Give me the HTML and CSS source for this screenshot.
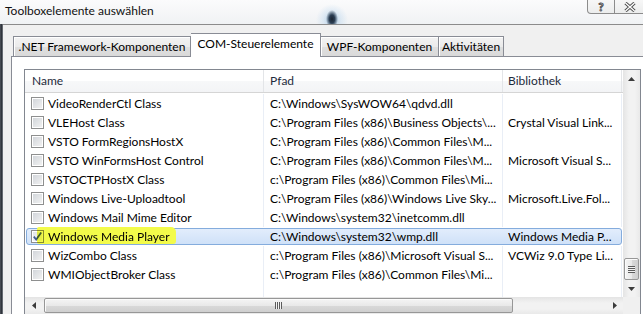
FILE: index.html
```html
<!DOCTYPE html>
<html lang="de">
<head>
    <meta charset="UTF-8">
    <meta name="viewport" content="width=device-width, initial-scale=1.0">
    <title>Toolboxelemente auswählen</title>
    <link rel="stylesheet" href="styles.css">
</head>
<body>
    <div class="window">
        <div class="titlebar">
            <span class="title">Toolboxelemente auswählen</span>
            <div class="caption-buttons">
                <span class="cap-btn cap-help">?</span>
                <span class="cap-btn cap-close">
                    <svg width="12" height="10" viewBox="0 0 12 10"><path d="M1.5 1 L10.5 9 M10.5 1 L1.5 9" stroke="#4a4a4a" stroke-width="3.2"/><path d="M1.5 1 L10.5 9 M10.5 1 L1.5 9" stroke="#fff" stroke-width="1.4"/></svg>
                </span>
            </div>
        </div>

        <div class="frame">
            <div class="frame-edge"></div>
            <div class="client">
                <div class="tabs">
                    <div class="tab tab-net">.NET Framework-Komponenten</div>
                    <div class="tab tab-com active">COM-Steuerelemente</div>
                    <div class="tab tab-wpf">WPF-Komponenten</div>
                    <div class="tab tab-act">Aktivitäten</div>
                </div>

                <div class="tab-panel">
                    <div class="listview">
                        <div class="lv-content">
                            <div class="lv-header">
                                <div class="hcol col-name">Name</div>
                                <div class="hcol col-path">Pfad</div>
                                <div class="hcol col-lib">Bibliothek</div>
                                <div class="hcol col-rest"></div>
                            </div>

                            <div class="lv-rows">
                                <div class="row">
                                    <div class="cell col-name"><span class="check"></span>VideoRenderCtl Class</div>
                                    <div class="cell col-path">C:\Windows\SysWOW64\qdvd.dll</div>
                                    <div class="cell col-lib"></div>
                                </div>
                                <div class="row">
                                    <div class="cell col-name"><span class="check"></span>VLEHost Class</div>
                                    <div class="cell col-path">C:\Program Files (x86)\Business Objects\...</div>
                                    <div class="cell col-lib">Crystal Visual Link...</div>
                                </div>
                                <div class="row">
                                    <div class="cell col-name"><span class="check"></span>VSTO FormRegionsHostX</div>
                                    <div class="cell col-path">C:\Program Files (x86)\Common Files\M...</div>
                                    <div class="cell col-lib"></div>
                                </div>
                                <div class="row">
                                    <div class="cell col-name"><span class="check"></span>VSTO WinFormsHost Control</div>
                                    <div class="cell col-path">C:\Program Files (x86)\Common Files\M...</div>
                                    <div class="cell col-lib">Microsoft Visual S...</div>
                                </div>
                                <div class="row">
                                    <div class="cell col-name"><span class="check"></span>VSTOCTPHostX Class</div>
                                    <div class="cell col-path">c:\Program Files (x86)\Common Files\Mi...</div>
                                    <div class="cell col-lib"></div>
                                </div>
                                <div class="row">
                                    <div class="cell col-name"><span class="check"></span>Windows Live-Uploadtool</div>
                                    <div class="cell col-path">C:\Program Files (x86)\Windows Live Sky...</div>
                                    <div class="cell col-lib">Microsoft.Live.Fol...</div>
                                </div>
                                <div class="row">
                                    <div class="cell col-name"><span class="check"></span>Windows Mail Mime Editor</div>
                                    <div class="cell col-path">C:\Windows\system32\inetcomm.dll</div>
                                    <div class="cell col-lib"></div>
                                </div>
                                <div class="row selected">
                                    <div class="cell col-name">
                                        <span class="check checked">
                                            <svg width="11" height="11" viewBox="0 0 11 11"><path d="M1.8 5.6 L4.2 8.6 L9.2 1.6" fill="none" stroke="#3f5a8c" stroke-width="1.7"/></svg>
                                        </span>Windows Media Player
                                        <span class="marker"></span>
                                    </div>
                                    <div class="cell col-path">C:\Windows\system32\wmp.dll</div>
                                    <div class="cell col-lib">Windows Media P...</div>
                                </div>
                                <div class="row">
                                    <div class="cell col-name"><span class="check"></span>WizCombo Class</div>
                                    <div class="cell col-path">c:\Program Files (x86)\Microsoft Visual S...</div>
                                    <div class="cell col-lib">VCWiz 9.0 Type Li...</div>
                                </div>
                                <div class="row">
                                    <div class="cell col-name"><span class="check"></span>WMIObjectBroker Class</div>
                                    <div class="cell col-path">c:\Program Files (x86)\Common Files\Mi...</div>
                                    <div class="cell col-lib"></div>
                                </div>
                                <div class="row filler">
                                    <div class="cell col-name"></div>
                                    <div class="cell col-path"></div>
                                    <div class="cell col-lib"></div>
                                </div>
                            </div>
                        </div>

                        <div class="vscroll">
                            <div class="sb-btn">
                                <svg width="7" height="4" viewBox="0 0 7 4"><polygon points="0,4 3.5,0 7,4" fill="#3c3c3c"/></svg>
                            </div>
                            <div class="vtrack">
                                <div class="vthumb"><span class="grip-h"></span></div>
                            </div>
                            <div class="sb-btn">
                                <svg width="7" height="4" viewBox="0 0 7 4"><polygon points="0,0 7,0 3.5,4" fill="#3c3c3c"/></svg>
                            </div>
                        </div>

                        <div class="hscroll">
                            <div class="sb-btn sb-left">
                                <svg width="4" height="7" viewBox="0 0 4 7"><polygon points="4,0 4,7 0,3.5" fill="#3c3c3c"/></svg>
                            </div>
                            <div class="htrack">
                                <div class="hthumb"><span class="grip-v"></span></div>
                            </div>
                            <div class="sb-btn sb-right">
                                <svg width="4" height="7" viewBox="0 0 4 7"><polygon points="0,0 4,3.5 0,7" fill="#3c3c3c"/></svg>
                            </div>
                        </div>

                        <div class="sb-corner"></div>
                    </div>
                </div>
            </div>
        </div>
    </div>
</body>
</html>
```

FILE: styles.css
```css
* {
    box-sizing: border-box;
}

body {
    margin: 0;
    font-family: Lato, "Liberation Sans", sans-serif;
    font-size: 12px;
    color: #000;
    background: #fff;
}

.window {
    width: 643px;
    height: 314px;
    overflow: hidden;
    display: flex;
    flex-direction: column;
}

/* title bar */

.titlebar {
    height: 24px;
    flex: none;
    display: flex;
    align-items: flex-start;
    background:
        radial-gradient(ellipse 6px 9px at 332px 19px, #1b2431 0%, #2a3d52 45%, rgba(42, 61, 82, 0) 100%),
        radial-gradient(ellipse 16px 16px at 332px 20px, rgba(120, 175, 220, 0.55) 0%, rgba(170, 205, 235, 0.3) 55%, rgba(255, 255, 255, 0) 100%),
        linear-gradient(#fbfbfc, #f0f2f4);
}

.title {
    padding-left: 5px;
    line-height: 22px;
    white-space: nowrap;
    color: #111;
}

.caption-buttons {
    margin-left: auto;
    margin-right: -12px;
    display: flex;
}

.cap-btn {
    height: 14px;
    display: flex;
    align-items: center;
    justify-content: center;
    border: 1px solid #8c8c8c;
    border-top: none;
    background: linear-gradient(#f7f7f7, #eceded);
}

.cap-help {
    width: 28px;
    border-bottom-left-radius: 4px;
    font-size: 11px;
    font-weight: bold;
    color: #fff;
    -webkit-text-stroke: 1px #555;
}

.cap-close {
    width: 40px;
    border-left: none;
    padding-right: 10px;
}

/* frame + client */

.frame {
    flex: 1;
    display: flex;
    min-height: 0;
}

.frame-edge {
    width: 3px;
    flex: none;
    background: linear-gradient(to right, #50555d, #30353c, #7d828a);
}

.client {
    flex: 1;
    border-top: 1px solid #8b8b8b;
    background: #f0f0f0;
    padding-left: 8px;
    display: flex;
    flex-direction: column;
}

/* tabs */

.tabs {
    height: 31px;
    flex: none;
    display: flex;
    align-items: flex-end;
    padding-left: 2px;
}

.tab {
    height: 20px;
    line-height: 19px;
    text-align: center;
    white-space: nowrap;
    border: 1px solid #898c95;
    border-bottom: none;
    background: linear-gradient(#f3f3f3, #ebebeb 50%, #dfdfdf 51%, #d9d9d9);
    box-shadow: inset 1px 1px 0 #fff;
}

.tab + .tab {
    border-left: none;
}

.tab.active {
    height: 24px;
    line-height: 20px;
    margin-bottom: -1px;
    background: #fff;
    box-shadow: none;
    position: relative;
    z-index: 1;
}

.tab-net { width: 178px; }
.tab-com { width: 130px; }
.tab-wpf { width: 118px; }
.tab-act { width: 65px; }

.tab-panel {
    width: 660px;
    flex: 1;
    background: #fff;
    border: 1px solid #898c95;
    padding: 12px 0 0 12px;
}

/* list view */

.listview {
    width: 617px;
    height: 246px;
    border: 1px solid #828790;
    display: grid;
    grid-template-columns: 598px 17px;
    grid-template-rows: 227px 17px;
}

.lv-content {
    display: flex;
    flex-direction: column;
    overflow: hidden;
}

.lv-header {
    height: 23px;
    flex: none;
    display: flex;
    border-bottom: 1px solid #d5d5d5;
    background: linear-gradient(#fff, #fff 50%, #f7f8f9 51%, #f3f4f6);
}

.hcol {
    line-height: 21px;
    border-right: 1px solid #e3e5e8;
    color: #1e2b3c;
}

.col-name { width: 239px; padding-left: 6px; }
.col-path { width: 239px; padding-left: 6px; }
.col-lib { width: 119px; padding-left: 5px; }
.col-rest { flex: 1; border-right: none; }

.hcol.col-name { padding-left: 7px; }

.lv-rows {
    flex: 1;
    display: flex;
    flex-direction: column;
    padding-top: 1px;
}

.row {
    height: 19px;
    flex: none;
    display: flex;
}

.row.filler {
    flex: 1;
}

.cell {
    display: flex;
    align-items: center;
    white-space: nowrap;
    overflow: hidden;
    border-right: 1px solid #e9eef6;
    position: relative;
    z-index: 1;
}

.row.selected {
    position: relative;
}

.row.selected::before {
    content: '';
    position: absolute;
    left: 1px;
    right: 1px;
    top: 1px;
    bottom: 1px;
    border: 1px solid #84acdd;
    border-radius: 3px;
    background: linear-gradient(#e2edfc, #cfe1f8);
}

.row.selected .cell {
    border-right-color: transparent;
}

.check {
    width: 13px;
    height: 13px;
    flex: none;
    margin-right: 4px;
    border: 1px solid #8e8f8f;
    background: linear-gradient(135deg, #cfd3d8, #f4f4f4);
    box-shadow: inset 0 0 0 1px #fff;
    display: flex;
    align-items: center;
    justify-content: center;
}

.check.checked {
    background: linear-gradient(135deg, #dfe3e8, #f8f8f8);
}

.marker {
    position: absolute;
    left: 12px;
    top: 0;
    width: 139px;
    height: 17px;
    border-radius: 2px 5px 3px 2px;
    background: #f3fb4a;
    mix-blend-mode: multiply;
}

/* scrollbars */

.sb-btn {
    width: 17px;
    height: 17px;
    flex: none;
    display: flex;
    align-items: center;
    justify-content: center;
}

.vscroll {
    display: flex;
    flex-direction: column;
    background: linear-gradient(to right, #e4e4e4, #f2f2f2 35%, #f2f2f2 70%, #e9e9e9);
}

.vtrack {
    flex: 1;
    display: flex;
    flex-direction: column;
    padding: 0 1px;
}

.vthumb {
    margin-top: auto;
    height: 22px;
    border: 1px solid #979797;
    border-radius: 2px;
    background: linear-gradient(to right, #f4f4f4, #e9e9e9 50%, #d9d9d9 51%, #cfcfcf);
    box-shadow: inset 1px 1px 0 #fbfbfb;
    display: flex;
    align-items: center;
    justify-content: center;
}

.grip-h {
    width: 7px;
    height: 7px;
    background: repeating-linear-gradient(#5b5b5b 0 1px, #f2f2f2 1px 2px);
}

.hscroll {
    display: flex;
    background: linear-gradient(#e4e4e4, #f2f2f2 35%, #f2f2f2 70%, #e9e9e9);
}

.sb-left {
    width: 18px;
}

.htrack {
    flex: 1;
    display: flex;
    padding: 1px 0;
}

.hthumb {
    width: 469px;
    margin-left: 1px;
    border: 1px solid #979797;
    border-radius: 2px;
    background: linear-gradient(#f4f4f4, #e9e9e9 50%, #d9d9d9 51%, #cfcfcf);
    box-shadow: inset 1px 1px 0 #fbfbfb;
    display: flex;
    align-items: center;
    justify-content: center;
}

.grip-v {
    width: 7px;
    height: 7px;
    background: repeating-linear-gradient(to right, #5b5b5b 0 1px, #f2f2f2 1px 2px);
}

.sb-corner {
    background: #f0f0f0;
}
```
